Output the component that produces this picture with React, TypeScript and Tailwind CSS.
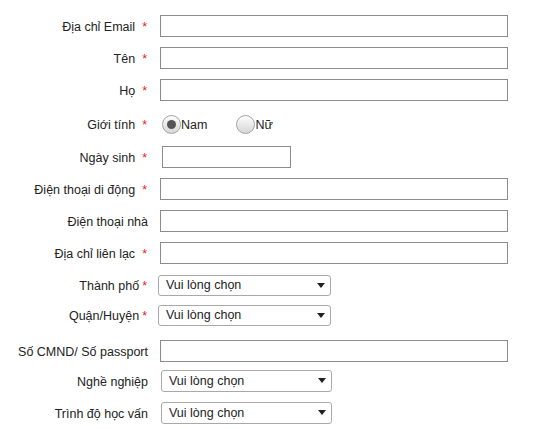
import React from "react";

type Row = {
  label: string;
  required?: boolean;
  tight?: boolean;
  kind: "input" | "short" | "select" | "radio";
  mt: string;
  gap: string;
};

const rows: Row[] = [
  { label: "Địa chỉ Email", required: true, kind: "input", mt: "mt-[15px]", gap: "ml-[12px]" },
  { label: "Tên", required: true, kind: "input", mt: "mt-[10px]", gap: "ml-[12px]" },
  { label: "Họ", required: true, kind: "input", mt: "mt-[10px]", gap: "ml-[12px]" },
  { label: "Giới tính", required: true, kind: "radio", mt: "mt-[13px]", gap: "ml-[14px]" },
  { label: "Ngày sinh", required: true, kind: "short", mt: "mt-[11px]", gap: "ml-[14px]" },
  { label: "Điện thoại di động", required: true, kind: "input", mt: "mt-[10px]", gap: "ml-[12px]" },
  { label: "Điện thoại nhà", kind: "input", mt: "mt-[10px]", gap: "ml-[12px]" },
  { label: "Địa chỉ liên lạc", required: true, kind: "input", mt: "mt-[10px]", gap: "ml-[12px]" },
  { label: "Thành phố", required: true, tight: true, kind: "select", mt: "mt-[11px]", gap: "ml-[10px]" },
  { label: "Quận/Huyện", required: true, tight: true, kind: "select", mt: "mt-[9px]", gap: "ml-[10px]" },
  { label: "Số CMND/ Số passport", kind: "input", mt: "mt-[14px]", gap: "ml-[12px]" },
  { label: "Nghề nghiệp", kind: "select", mt: "mt-[8px]", gap: "ml-[13px]" },
  { label: "Trình độ học vấn", kind: "select", mt: "mt-[10px]", gap: "ml-[13px]" },
];

const Radio = ({ checked, label }: { checked?: boolean; label: string }) => (
  <div className="flex items-center">
    <span className="flex h-[19px] w-[19px] items-center justify-center rounded-full border border-[#a3a3a3] bg-gradient-to-b from-[#fdfdfd] to-[#d6d6d6] shadow-[inset_0_1px_1px_rgba(255,255,255,0.8)]">
      {checked && <span className="h-[9px] w-[9px] rounded-full bg-[#555]" />}
    </span>
    <span className="pt-[2px] text-[12.5px] text-[#222]">{label}</span>
  </div>
);

const Control = ({ row }: { row: Row }) => {
  if (row.kind === "input")
    return <input className="h-[22px] w-[348px] border border-[#8c8c8c] bg-white" />;
  if (row.kind === "short")
    return <input className="h-[22px] w-[129px] border border-[#8c8c8c] bg-white" />;
  if (row.kind === "radio")
    return (
      <div className="flex items-center gap-[29px]">
        <Radio checked label="Nam" />
        <Radio label="Nữ" />
      </div>
    );
  return (
    <div
      className={`flex ${row.tight ? "h-[21px] w-[173px]" : "h-[22px] w-[171px]"} items-center justify-between rounded-[3px] border border-[#a9a9a9] bg-white pl-[7px] pr-[5px] text-[12.5px] text-[#222]`}
    >
      <span className="pt-[1px]">Vui lòng chọn</span>
      <svg width="8" height="5" viewBox="0 0 8 5">
        <path d="M0 0h8L4 5z" fill="#222" />
      </svg>
    </div>
  );
};

export default function App() {
  return (
    <div className="min-h-screen w-full bg-white font-['Liberation_Sans',Arial,sans-serif] text-[12.5px] text-[#222]">
      <div className="flex flex-col">
        {rows.map((row) => (
          <div key={row.label} className={`flex items-center ${row.mt}`}>
            <div className="w-[148px] pt-[2px] text-right leading-none">
              {row.label}
              {row.required && (
                <span className={`${row.tight ? "ml-[3px]" : "ml-[7px]"} mr-[1px] text-[#e8201a]`}>*</span>
              )}
            </div>
            <div className={row.gap}>
              <Control row={row} />
            </div>
          </div>
        ))}
      </div>
    </div>
  );
}
